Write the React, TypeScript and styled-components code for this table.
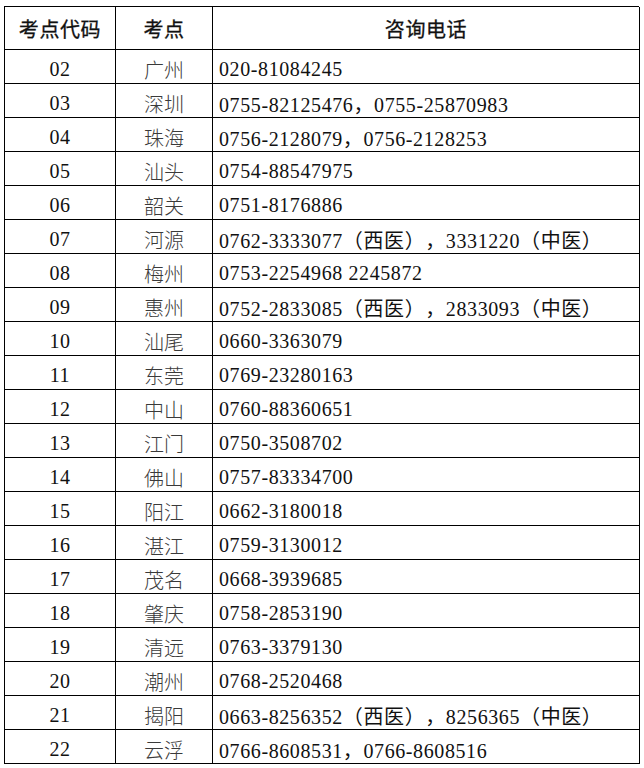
import React from "react";
import styled, { createGlobalStyle } from "styled-components";

/**
 * TYPES
 */
type Row = {
  code: string
  city: string
  phone: string
}

type CellProps = {
  $align?: 'left' | 'center'
}

/**
 * DATA
 */
const rows: Row[] = [
  { code: '02', city: '广州', phone: '020-81084245' },
  { code: '03', city: '深圳', phone: '0755-82125476，0755-25870983' },
  { code: '04', city: '珠海', phone: '0756-2128079，0756-2128253' },
  { code: '05', city: '汕头', phone: '0754-88547975' },
  { code: '06', city: '韶关', phone: '0751-8176886' },
  { code: '07', city: '河源', phone: '0762-3333077（西医），3331220（中医）' },
  { code: '08', city: '梅州', phone: '0753-2254968 2245872' },
  { code: '09', city: '惠州', phone: '0752-2833085（西医），2833093（中医）' },
  { code: '10', city: '汕尾', phone: '0660-3363079' },
  { code: '11', city: '东莞', phone: '0769-23280163' },
  { code: '12', city: '中山', phone: '0760-88360651' },
  { code: '13', city: '江门', phone: '0750-3508702' },
  { code: '14', city: '佛山', phone: '0757-83334700' },
  { code: '15', city: '阳江', phone: '0662-3180018' },
  { code: '16', city: '湛江', phone: '0759-3130012' },
  { code: '17', city: '茂名', phone: '0668-3939685' },
  { code: '18', city: '肇庆', phone: '0758-2853190' },
  { code: '19', city: '清远', phone: '0763-3379130' },
  { code: '20', city: '潮州', phone: '0768-2520468' },
  { code: '21', city: '揭阳', phone: '0663-8256352（西医），8256365（中医）' },
  { code: '22', city: '云浮', phone: '0766-8608531，0766-8608516' },
];

/**
 * STYLES
 */
const GlobalStyle = createGlobalStyle`
  html, body {
    margin: 0;
    padding: 0;
    background: #fff;
  }
`;

const StyledTable = styled.div`
  margin: 6px 0 0 4px;
  width: 635px;
  display: grid;
  grid-template-columns: 111px 97px 427px;
  border-left: 1px solid #000;
  border-top: 1px solid #000;
  box-sizing: border-box;
`;

const StyledCell = styled.div<CellProps>`
  height: 34px;
  box-sizing: border-box;
  border-right: 1px solid #000;
  border-bottom: 1px solid #000;
  display: flex;
  align-items: center;
  justify-content: ${({ $align }) => $align === 'left' ? 'flex-start' : 'center'};
  padding: ${({ $align }) => $align === 'left' ? '5px 0 0 6px' : '5px 0 0 0'};
  font-family: "Liberation Serif", "Noto Sans CJK SC", serif;
  font-size: 20px;
  letter-spacing: 0.6px;
  text-spacing-trim: space-all;
  color: #111;
  white-space: nowrap;
`;

const StyledHeadCell = styled(StyledCell)`
  height: 43px;
  padding: 0;
  font-family: "Noto Sans CJK SC", sans-serif;
  font-weight: 400;
  font-size: 20px;
  letter-spacing: 0.6px;
  color: #111;
  -webkit-text-stroke: 0.3px #111;
`;

const StyledCity = styled(StyledCell)`
  font-family: "Noto Sans CJK SC", sans-serif;
  font-weight: 300;
  font-size: 20px;
  letter-spacing: 0;
  color: #3a3a3a;
`;

/**
 * COMPONENT
 */
export const App = () => {
  return (
    <>
      <GlobalStyle />
      <StyledTable>
        <StyledHeadCell>考点代码</StyledHeadCell>
        <StyledHeadCell>考点</StyledHeadCell>
        <StyledHeadCell>咨询电话</StyledHeadCell>
        {rows.map(row => (
          <React.Fragment key={row.code}>
            <StyledCell>{row.code}</StyledCell>
            <StyledCity>{row.city}</StyledCity>
            <StyledCell $align="left">{row.phone}</StyledCell>
          </React.Fragment>
        ))}
      </StyledTable>
    </>
  )
};

export default App;
